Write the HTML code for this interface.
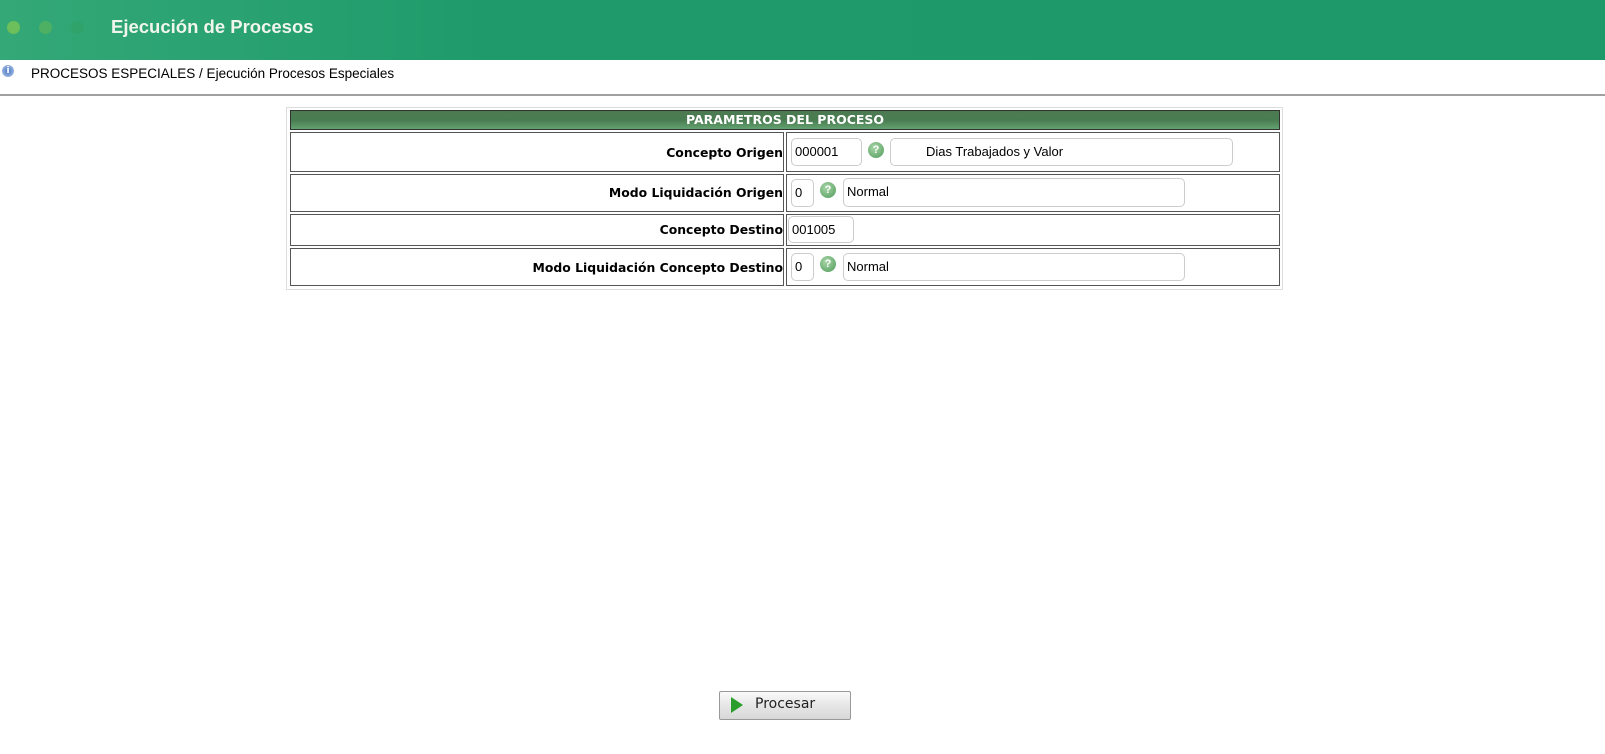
<!DOCTYPE html>
<html><head><meta charset="utf-8"><style>
body{margin:0;width:1605px;height:754px;position:relative;background:#fff;font-family:"DejaVu Sans","Liberation Sans",sans-serif;overflow:hidden}
.a{position:absolute}
.hdr{left:0;top:0;width:1605px;height:60px;background:linear-gradient(90deg,#34a877 0%,#1f9b6b 30%,#1e9a6a 100%)}
.dot{width:13px;height:13px;border-radius:50%;top:21px}
.cell{border:1px solid #555;box-sizing:border-box;background:#fff}
.lbl{font-weight:bold;font-size:12.4px;color:#000;text-align:right}
.inp{border:1px solid #ccc;border-radius:5px;box-sizing:border-box;font-size:13px;font-family:"Liberation Sans",sans-serif;padding-left:3px;line-height:26px;color:#000}
.q{width:16px;height:16px;border-radius:50%;background:radial-gradient(circle at 40% 35%,#a9d6a9,#4e9a58);color:#fff;font-size:11px;font-weight:bold;text-align:center;line-height:16px;font-family:"Liberation Sans",sans-serif}
</style></head><body>
<div class="a hdr"></div>
<div class="a dot" style="left:7px;background:#6cbf5a"></div>
<div class="a dot" style="left:39px;background:#4db063"></div>
<div class="a dot" style="left:71px;background:#2fa36a"></div>
<div class="a" style="left:111px;top:16px;color:#f0f5ee;font-weight:bold;font-size:18.5px;font-family:'Liberation Sans',sans-serif">Ejecución de Procesos</div>
<div class="a" style="left:2px;top:65px;width:12px;height:12px;border-radius:50%;background:radial-gradient(circle,#4a78c8,#b9c9e6);color:#fff;font-size:9px;text-align:center;line-height:12px;font-weight:bold">i</div>
<div class="a" style="left:31px;top:66px;font-family:'Liberation Sans',sans-serif;font-size:13.5px">PROCESOS ESPECIALES / Ejecución Procesos Especiales</div>
<div class="a" style="left:0;top:94px;width:1605px;height:2px;background:#a0a0a0"></div>

<div class="a" style="left:286px;top:107px;width:997px;height:183px;border:1px solid #ddd;box-sizing:border-box"></div>
<div class="a" style="left:290px;top:110px;width:990px;height:20px;background:linear-gradient(#4c7b52,#4a7c51 50%,#63a270);border:1px solid #333;box-sizing:border-box;color:#fff;font-weight:bold;font-size:12.5px;text-align:center;line-height:18px">PARAMETROS DEL PROCESO</div>

<div class="a cell" style="left:290px;top:132px;width:494px;height:40px"></div>
<div class="a cell" style="left:786px;top:132px;width:494px;height:40px"></div>
<div class="a cell" style="left:290px;top:174px;width:494px;height:38px"></div>
<div class="a cell" style="left:786px;top:174px;width:494px;height:38px"></div>
<div class="a cell" style="left:290px;top:214px;width:494px;height:32px"></div>
<div class="a cell" style="left:786px;top:214px;width:494px;height:32px"></div>
<div class="a cell" style="left:290px;top:248px;width:494px;height:38px"></div>
<div class="a cell" style="left:786px;top:248px;width:494px;height:38px"></div>

<div class="a lbl" style="right:822px;top:145px">Concepto Origen</div>
<div class="a lbl" style="right:822px;top:185px">Modo Liquidación Origen</div>
<div class="a lbl" style="right:822px;top:222px">Concepto Destino</div>
<div class="a lbl" style="right:822px;top:260px">Modo Liquidación Concepto Destino</div>

<div class="a inp" style="left:791px;top:138px;width:71px;height:28px">000001</div>
<div class="a q" style="left:868px;top:142px">?</div>
<div class="a inp" style="left:890px;top:138px;width:343px;height:28px;padding-left:35px">Dias Trabajados y Valor</div>

<div class="a inp" style="left:791px;top:179px;width:23px;height:28px">0</div>
<div class="a q" style="left:820px;top:182px">?</div>
<div class="a inp" style="left:843px;top:178px;width:342px;height:29px">Normal</div>

<div class="a inp" style="left:788px;top:216px;width:66px;height:27px">001005</div>

<div class="a inp" style="left:791px;top:253px;width:23px;height:28px">0</div>
<div class="a q" style="left:820px;top:256px">?</div>
<div class="a inp" style="left:843px;top:253px;width:342px;height:28px">Normal</div>

<div class="a" style="left:719px;top:691px;width:132px;height:29px;border:1px solid #999;border-radius:2px;box-sizing:border-box;background:linear-gradient(#fafafa,#e6e6e6 50%,#d8d8d8)"></div>
<div class="a" style="left:731px;top:697px;width:0;height:0;border-left:12px solid #2a9d2a;border-top:8px solid transparent;border-bottom:8px solid transparent"></div>
<div class="a" style="left:755px;top:696px;font-size:14px;font-family:'DejaVu Sans',sans-serif;color:#222">Procesar</div>
</body></html>
